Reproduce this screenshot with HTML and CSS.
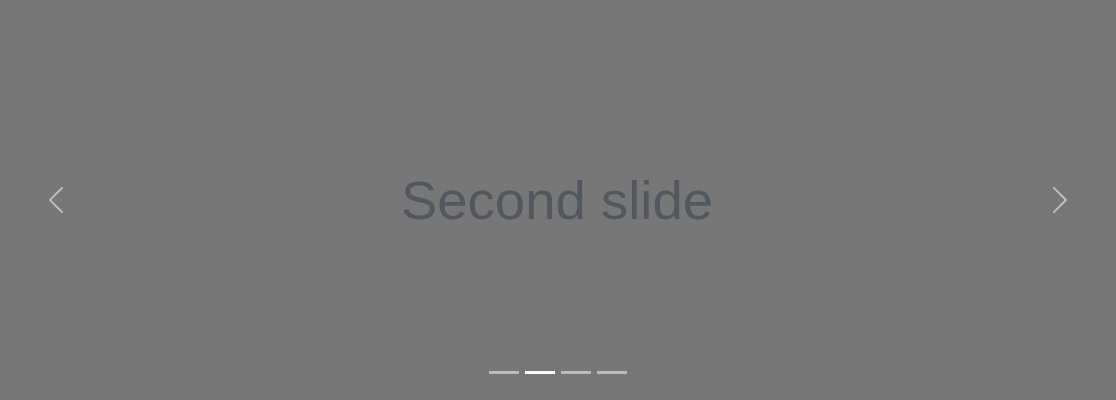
FILE: index.html
```html
<!DOCTYPE html>
<html lang="en">
<head>
<meta charset="utf-8">
<title>Carousel</title>
<link rel="stylesheet" href="styles.css">
</head>
<body>
<div class="carousel">
  <div class="slide">
    <span class="slide-text">Second slide</span>
  </div>
  <div class="indicators">
    <button class="indicator"></button>
    <button class="indicator active"></button>
    <button class="indicator"></button>
    <button class="indicator"></button>
  </div>
  <button class="control control-prev" aria-label="Previous">
    <svg class="control-icon" viewBox="0 0 16 16" width="32" height="32"><path fill="#fff" d="M11.354 1.646a.5.5 0 0 1 0 .708L5.707 8l5.647 5.646a.5.5 0 0 1-.708.708l-6-6a.5.5 0 0 1 0-.708l6-6a.5.5 0 0 1 .708 0z"/></svg>
  </button>
  <button class="control control-next" aria-label="Next">
    <svg class="control-icon" viewBox="0 0 16 16" width="32" height="32"><path fill="#fff" d="M4.646 1.646a.5.5 0 0 1 .708 0l6 6a.5.5 0 0 1 0 .708l-6 6a.5.5 0 0 1-.708-.708L10.293 8 4.646 2.354a.5.5 0 0 1 0-.708z"/></svg>
  </button>
</div>
</body>
</html>
```
FILE: styles.css
```css
html, body {
  margin: 0;
  padding: 0;
  background: #777;
}
.carousel {
  position: relative;
  width: 1116px;
  height: 400px;
  overflow: hidden;
  background: #777;
}
.slide {
  height: 100%;
  display: flex;
  align-items: center;
  justify-content: center;
}
.slide-text {
  font-family: "Liberation Sans", Arial, sans-serif;
  font-size: 54.5px;
  color: #52585f;
  line-height: 1;
  margin-top: 3px;
  margin-left: -2px;
}
.indicators {
  position: absolute;
  left: 0;
  right: 0;
  bottom: 0;
  margin-bottom: 16px;
  display: flex;
  justify-content: center;
}
.indicator {
  box-sizing: content-box;
  width: 30px;
  height: 3px;
  margin: 0 3px;
  padding: 0;
  border: 0;
  border-top: 10px solid transparent;
  border-bottom: 10px solid transparent;
  background-color: #fff;
  background-clip: padding-box;
  opacity: .5;
}
.indicator.active {
  opacity: 1;
}
.control {
  position: absolute;
  top: 0;
  bottom: 0;
  width: 10%;
  padding: 0;
  border: 0;
  background: none;
  display: flex;
  align-items: center;
  justify-content: center;
  opacity: .5;
}
.control-prev { left: 0; }
.control-next { right: 0; }
.control-icon { display: block; }
```
